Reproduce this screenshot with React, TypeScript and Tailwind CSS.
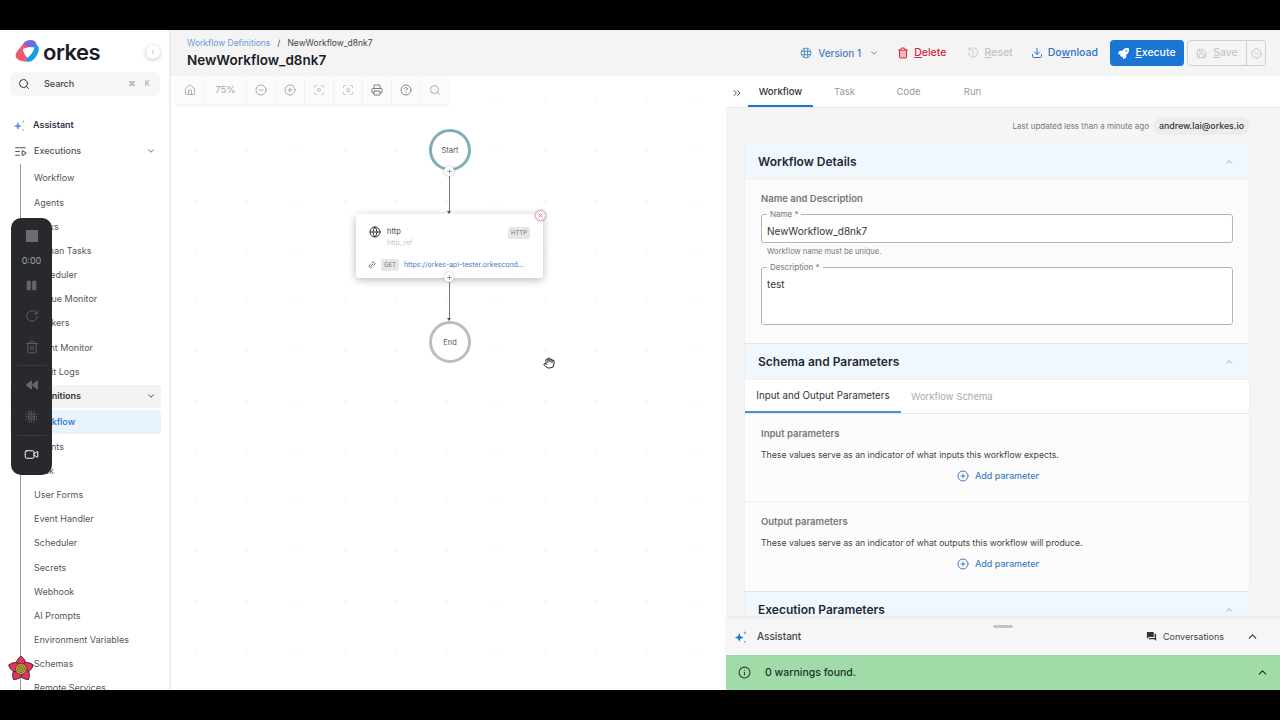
import {
  ChevronDown,
  ChevronLeft,
  ChevronUp,
  ChevronsRight,
  CircleChevronDown,
  CircleHelp,
  CircleMinus,
  CirclePlus,
  Download,
  Focus,
  Globe,
  Hand,
  Home,
  Info,
  Link2,
  ListVideo,
  Plus,
  Printer,
  RotateCw,
  Save,
  ScanSearch,
  Search,
  Trash2,
  Video,
  X,
} from "lucide-react";
import type { ReactNode } from "react";
import { FaBackward, FaPause, FaRocket } from "react-icons/fa";
import { MdForum } from "react-icons/md";

const executionItems = [
  "Workflow",
  "Agents",
  "Tasks",
  "Human Tasks",
  "Scheduler",
  "Queue Monitor",
  "Workers",
  "Event Monitor",
  "Audit Logs",
];

const definitionItems = [
  "Agents",
  "Task",
  "User Forms",
  "Event Handler",
  "Scheduler",
  "Secrets",
  "Webhook",
  "AI Prompts",
  "Environment Variables",
  "Schemas",
  "Remote Services",
];

function Sparkle({ className }: { className: string }) {
  return (
    <svg viewBox="0 0 16 16" className={className} fill="currentColor">
      <path d="M6 3.500 7.400 7 11 8.500 7.400 10 6 13.500 4.600 10 1 8.500 4.600 7Z" />
      <path d="M12.500 1 13.100 2.500 14.500 3 13.100 3.600 12.500 5 11.900 3.600 10.500 3 11.900 2.500Z" opacity="0.7" />
      <path d="M12.500 12 13 13 14 13.500 13 14 12.500 15 12 14 11 13.500 12 13Z" opacity="0.7" />
    </svg>
  );
}

function GridGlobe({ className }: { className: string }) {
  return (
    <svg viewBox="0 0 16 16" className={className} fill="none" stroke="currentColor" strokeWidth="1.200">
      <circle cx="8" cy="8" r="6.500" />
      <path d="M5.800 2v12M10.200 2v12M2 5.800h12M2 10.200h12" />
    </svg>
  );
}

function DottedGrid({ className }: { className: string }) {
  return (
    <svg viewBox="0 0 16 16" className={className} fill="none" stroke="currentColor" strokeWidth="1.300" strokeDasharray="1.500 1">
      <path d="M5 1v14M8 1v14M11 1v14M1 5h14M1 8h14M1 11h14" />
    </svg>
  );
}

function ResetIcon({ className }: { className: string }) {
  return (
    <svg viewBox="0 0 16 16" className={className} fill="none" stroke="currentColor" strokeWidth="1.200" strokeLinecap="round">
      <path d="M3 3.500A6.300 6.300 0 1 1 1.800 8" />
      <path d="M2.500 1.500v2.500H5" />
      <path d="M8 4.800v4M8 10.800v.4" />
    </svg>
  );
}

function Logo() {
  return (
    <svg viewBox="0 0 24 24" className="h-[25px] w-[25px] shrink-0">
      <path d="M7.500 5 C9 2 12 1 15 1 C18 1 20 2 20.500 5 L21 9 L12 8Z" fill="#7f63e6" />
      <path d="M8 4.500 L13 8 L11 21.500 C8 22 4 21 2 19 C0 17 0 15 2 12Z" fill="#ec5a72" />
      <path d="M20 5 C22.500 6 23.500 9 22.500 12 C21.500 15 20 18 17.500 20 C15.500 22 13 22 10.500 21.500 L13 11Z" fill="#159fe3" />
      <path d="M7.500 9.500 C10 8 15 7.500 18.500 8 C18.500 11 15 16 12 18 C9.500 16 8 12.500 7.500 9.500Z" fill="#ffffff" />
    </svg>
  );
}

function NavLink({ label, active }: { label: string; active?: boolean }) {
  return (
    <div
      className={
        "flex h-[24.2px] items-center rounded-sm text-[9px] " +
        (active
          ? "ml-[10px] w-[151px] bg-[#e9f3fc] pl-[24px] font-medium text-[#1976d2]"
          : "pl-[34px] text-[#555]")
      }
    >
      {label}
    </div>
  );
}

function Sidebar() {
  return (
    <aside className="flex h-full w-[171px] shrink-0 flex-col overflow-hidden border-r-[2px] border-[#eeeeee] bg-white">
      <div className="flex h-[40px] shrink-0 items-center pl-[15px] pt-[3px]">
        <Logo />
        <span className="ml-[3px] text-[22px] leading-none font-semibold tracking-[-0.5px] text-[#1c1c28]">orkes</span>
        <div className="ml-[46px] flex h-[14px] w-[14px] items-center justify-center rounded-full bg-white shadow-[0_1px_4px_rgba(0,0,0,0.25)]">
          <ChevronLeft size={8} className="text-[#aaa]" />
        </div>
      </div>
      <div className="ml-[10px] mt-[2px] flex h-[24px] w-[150px] shrink-0 items-center rounded-md bg-[#f6f6f6] pl-[8px]">
        <Search size={12} className="text-[#333]" />
        <span className="ml-[14px] text-[9px] font-medium text-[#444]">Search</span>
        <span className="ml-auto mr-[3px] flex h-[12px] w-[12px] items-center justify-center text-[7px] text-[#999]">⌘</span>
        <span className="mr-[7px] flex h-[12px] w-[12px] items-center justify-center text-[7px] text-[#999]">K</span>
      </div>
      <div className="mt-[16px] flex h-[26px] shrink-0 items-center pl-[13px]">
        <Sparkle className="h-[13px] w-[13px] text-[#6f8fe0]" />
        <span className="ml-[7px] text-[9px] font-semibold text-[#33334a]">Assistant</span>
      </div>
      <div className="flex h-[26px] shrink-0 items-center pl-[14px] pr-[13px]">
        <ListVideo size={13} className="text-[#555]" />
        <span className="ml-[7px] text-[9px] font-medium text-[#555]">Executions</span>
        <ChevronDown size={10} className="ml-auto text-[#555]" />
      </div>
      <div className="relative flex-1">
        <div className="absolute bottom-0 left-[20px] top-0 w-px bg-[#9a9a9a]" />
        <div className="pt-[2px]">
          {executionItems.map((item) => (
            <NavLink key={item} label={item} />
          ))}
        </div>
        <div className="relative ml-[10px] mt-[1px] flex h-[23px] w-[151px] items-center rounded-sm bg-[#f3f3f3] pl-[24px] pr-[5px] text-[9px] font-semibold text-[#333]">
          Definitions
          <ChevronDown size={10} className="ml-auto text-[#333]" />
        </div>
        <div className="mt-[2.400px]">
          <NavLink label="Workflow" active />
        </div>
        {definitionItems.map((item) => (
          <NavLink key={item} label={item} />
        ))}
      </div>
    </aside>
  );
}

function HeaderAction({ icon, label, tone }: { icon: ReactNode; label: ReactNode; tone: string }) {
  return (
    <div className={"flex items-center gap-[5px] text-[10.500px] font-medium " + tone}>
      {icon}
      <span>{label}</span>
    </div>
  );
}

function Header() {
  return (
    <header className="flex h-[46px] shrink-0 items-center justify-between bg-[#f4f4f4] pl-[16px] pr-[14px] shadow-[0_1px_3px_rgba(0,0,0,0.05)]">
      <div>
        <div className="flex gap-[7px] text-[8.500px] leading-[12px]">
          <span className="text-[#6b9bd6]">Workflow Definitions</span>
          <span className="text-[#444]">/</span>
          <span className="text-[#444]">NewWorkflow_d8nk7</span>
        </div>
        <div className="mt-[3px] text-[13.500px] leading-[17px] font-semibold text-[#1c1c28]">NewWorkflow_d8nk7</div>
      </div>
      <div className="flex items-center">
        <div className="flex items-center gap-[6px] text-[10px] font-medium text-[#4a7ec0]">
          <GridGlobe className="h-[12px] w-[12px]" />
          Version 1
        </div>
        <ChevronDown size={10} className="ml-[8px] text-[#4a7ec0]" />
        <div className="ml-[18px]">
          <HeaderAction
            icon={<Trash2 size={12} className="fill-[#f2b8bd]" />}
            label={<><u>D</u>elete</>}
            tone="text-[#d6293e]"
          />
        </div>
        <div className="ml-[21px]">
          <HeaderAction
            icon={<ResetIcon className="h-[12px] w-[12px]" />}
            label={<><u>R</u>eset</>}
            tone="text-[#c2c2c2]"
          />
        </div>
        <div className="ml-[18px]">
          <HeaderAction
            icon={<Download size={12} />}
            label={<>Do<u>w</u>nload</>}
            tone="text-[#2f75c4]"
          />
        </div>
        <div className="ml-[12px] flex h-[26px] w-[74px] items-center justify-center gap-[6px] rounded-[4px] bg-[#1976d2] text-[10.500px] font-medium text-white">
          <FaRocket size={11} />
          <span><u>E</u>xecute</span>
        </div>
        <div className="ml-[3px] flex h-[26px] items-center rounded-[4px] border border-[#cfcfcf] text-[10.500px] text-[#c2c2c2]">
          <div className="flex h-full w-[59px] items-center justify-center gap-[6px] border-r border-[#cfcfcf]">
            <Save size={11} />
            <span><u>S</u>ave</span>
          </div>
          <div className="flex w-[18px] justify-center">
            <CircleChevronDown size={11} />
          </div>
        </div>
      </div>
    </header>
  );
}

function Toolbar() {
  const tool = "flex h-full w-[29px] items-center justify-center border-r border-[#f3f3f3]";
  return (
    <div className="absolute left-[5px] top-0 flex h-[28px] items-center bg-[#fbfbfb] text-[#a9a9a9] shadow-[0_2px_4px_rgba(0,0,0,0.06)]">
      <div className={tool}><Home size={12} /></div>
      <div className="flex h-full w-[42px] items-center justify-center border-r border-[#f3f3f3] text-[9.500px]">75%</div>
      <div className={tool}><CircleMinus size={12} /></div>
      <div className={tool}><CirclePlus size={12} /></div>
      <div className={tool + " text-[#c4c4c4]"}><Focus size={12} /></div>
      <div className={tool + " text-[#c4c4c4]"}><ScanSearch size={12} /></div>
      <div className={tool + " text-[#777]"}><Printer size={12} /></div>
      <div className={tool + " text-[#888]"}><CircleHelp size={12} /></div>
      <div className="flex h-full w-[27px] items-center justify-center"><Search size={12} /></div>
    </div>
  );
}

function PlusDot({ className }: { className: string }) {
  return (
    <div className={"absolute flex h-[10px] w-[10px] items-center justify-center rounded-full bg-white shadow-[0_0_2px_rgba(0,0,0,0.35)] " + className}>
      <Plus size={7} className="text-[#666]" />
    </div>
  );
}

function Connector({ className }: { className: string }) {
  return (
    <div className={"absolute left-[278px] w-px bg-[#777] " + className}>
      <div className="absolute -bottom-[1px] -left-[2px] h-0 w-0 border-x-[2.500px] border-t-[3px] border-x-transparent border-t-[#555]" />
    </div>
  );
}

function Canvas() {
  return (
    <div className="relative h-full min-w-0 flex-1 overflow-hidden bg-white bg-[radial-gradient(#f1f1f1_0.7px,transparent_0.8px)] bg-[length:50px_50px]">
      <Toolbar />
      <div className="absolute left-[258px] top-[53px] flex h-[42px] w-[42px] items-center justify-center rounded-full border-[3px] border-[#7eaeb8] bg-white pt-[1px] text-[7.500px] text-[#555]">
        Start
      </div>
      <PlusDot className="left-[273px] top-[90px]" />
      <Connector className="top-[100px] h-[37px]" />
      <div className="absolute left-[185px] top-[138px] h-[64px] w-[187px] rounded-[3px] bg-white shadow-[0_2px_8px_rgba(0,0,0,0.28)]">
        <div className="absolute left-[13px] top-[12px] text-[#333]"><Globe size={12} /></div>
        <div className="absolute left-[31px] top-[13px] text-[7.500px] leading-[10px] text-[#444]">http</div>
        <div className="absolute left-[31px] top-[24px] text-[7px] leading-[9px] text-[#c8c8c8]">http_ref</div>
        <div className="absolute right-[13px] top-[13px] rounded-[2px] bg-[#e6e6e6] px-[3px] py-[2px] text-[6px] leading-[8px] text-[#777]">HTTP</div>
        <div className="absolute left-[12px] top-[45px] flex items-center gap-[5px]">
          <Link2 size={8} className="-rotate-45 text-[#555]" />
          <span className="rounded-[2px] bg-[#e6e6e6] px-[3px] py-[2px] text-[6px] leading-[8px] text-[#777]">GET</span>
          <span className="w-[121px] truncate text-[7px] leading-[10px] text-[#3f7cc4]">https://orkes-api-tester.orkesconductor.io/api</span>
        </div>
      </div>
      <div className="absolute left-[364px] top-[134px] flex h-[11px] w-[11px] items-center justify-center rounded-full border border-[#e8a0a8] bg-white shadow-[0_0_3px_rgba(0,0,0,0.25)]">
        <X size={7} className="text-[#d6293e]" />
      </div>
      <PlusDot className="left-[273px] top-[196px]" />
      <Connector className="top-[206px] h-[38px]" />
      <div className="absolute left-[258px] top-[245px] flex h-[42px] w-[42px] items-center justify-center rounded-full border-[3px] border-[#bdbdbd] bg-white pt-[1px] text-[7.500px] text-[#555]">
        End
      </div>
      <div className="absolute left-[372px] top-[281px] text-[#222]"><Hand size={12} /></div>
    </div>
  );
}

function CardHeader({ title }: { title: string }) {
  return (
    <div className="flex h-[36px] shrink-0 items-center justify-between border-b border-[#eef0f2] bg-[#f1f8fd] pl-[13px] pr-[15px]">
      <span className="text-[12px] font-semibold text-[#1f2a37]">{title}</span>
      <ChevronUp size={10} className="text-[#999]" />
    </div>
  );
}

function OutlinedField({ label, value, height }: { label: string; value: string; height: string }) {
  return (
    <div className={"relative rounded-[3px] border border-[#b5b5b5] bg-white px-[5px] " + height}>
      <span className="absolute -top-[6px] left-[5px] bg-[#fbfbfb] px-[3px] text-[8px] leading-[10px] text-[#777]">
        {label}
      </span>
      <div className="pt-[10px] text-[10px] leading-[13px] text-[#333]">{value}</div>
    </div>
  );
}

function ParamSection({ title, text, h }: { title: string; text: string; h: string }) {
  return (
    <div className={"bg-[#fcfcfc] px-[16px] pt-[14px] " + h}>
      <div className="text-[9.500px] leading-[12px] font-semibold text-[#777]">{title}</div>
      <div className="mt-[9px] text-[8.700px] leading-[12px] text-[#444]">{text}</div>
      <div className="mt-[9px] flex items-center justify-center gap-[6px] pl-[2px] text-[9px] font-medium leading-[12px] text-[#3f7cc4]">
        <CirclePlus size={12} />
        Add parameter
      </div>
    </div>
  );
}

function RightPanel() {
  return (
    <div className="flex h-full w-[554px] shrink-0 flex-col bg-[#f5f5f5]">
      <div className="flex h-[32px] shrink-0 items-end border-b border-[#e8e8e8] bg-white pl-[5px] text-[9.500px]">
        <div className="flex h-full w-[17px] items-center pt-[2px] text-[#444]"><ChevronsRight size={12} /></div>
        <div className="flex h-full w-[65px] items-center justify-center border-b-2 border-[#1976d2] pt-[4px] font-medium text-[#333]">Workflow</div>
        <div className="flex h-full w-[63px] items-center justify-center pt-[2px] text-[#999]">Task</div>
        <div className="flex h-full w-[65px] items-center justify-center pt-[2px] text-[#999]">Code</div>
        <div className="flex h-full w-[63px] items-center justify-center pt-[2px] text-[#999]">Run</div>
      </div>
      <div className="min-h-0 flex-1 overflow-hidden pl-[18px] pr-[30px]">
        <div className="flex h-[36px] items-center justify-end gap-[4px] text-[8px] text-[#777]">
          Last updated less than a minute ago
          <span className="rounded-full bg-[#ececec] px-[6px] py-[2px] text-[8.800px] font-medium text-[#333]">andrew.lai@orkes.io</span>
        </div>
        <div className="border-x border-[#f0f0f0] bg-white">
          <CardHeader title="Workflow Details" />
          <div className="h-[164px] border-b border-[#e6e6e6] bg-[#fbfbfb] px-[16px] pt-[13px]">
            <div className="text-[9.500px] leading-[12px] font-semibold text-[#777]">Name and Description</div>
            <div className="mt-[9px]">
              <OutlinedField label="Name *" value="NewWorkflow_d8nk7" height="h-[29px]" />
            </div>
            <div className="mb-[10px] ml-[6px] mt-[4px] text-[7.500px] leading-[10px] text-[#777]">Workflow name must be unique.</div>
            <OutlinedField label="Description *" value="test" height="h-[58px]" />
          </div>
          <CardHeader title="Schema and Parameters" />
          <div className="flex h-[34px] border-b border-[#e4e4e4] bg-white pt-[1px] text-[9.800px]">
            <div className="flex w-[156px] items-center justify-center border-b-2 border-[#4a90d9] text-[#333]">Input and Output Parameters</div>
            <div className="ml-[10px] flex items-center text-[9.500px] text-[#aaa]">Workflow Schema</div>
          </div>
          <ParamSection
            title="Input parameters"
            text="These values serve as an indicator of what inputs this workflow expects."
            h="h-[88px] border-b border-[#f0f0f0]"
          />
          <ParamSection
            title="Output parameters"
            text="These values serve as an indicator of what outputs this workflow will produce."
            h="h-[90px] border-b border-[#dfe3e6]"
          />
          <CardHeader title="Execution Parameters" />
        </div>
      </div>
      <div className="relative flex h-[37px] shrink-0 items-center bg-[#f6f6f6] pl-[8px] pr-[21px] shadow-[0_-1px_3px_rgba(0,0,0,0.08)]">
        <div className="absolute left-[267px] top-[7px] h-[3px] w-[20px] rounded-full bg-[#c4c4c4]" />
        <Sparkle className="h-[14px] w-[14px] text-[#1976d2]" />
        <span className="ml-[9px] text-[10px] font-medium text-[#444]">Assistant</span>
        <MdForum size={11} className="ml-auto text-[#333]" />
        <span className="ml-[6px] text-[9px] text-[#444]">Conversations</span>
        <ChevronUp size={13} className="ml-[22px] text-[#333]" />
      </div>
      <div className="flex h-[35px] shrink-0 items-center bg-[#a0dba8] pl-[12px] pr-[11px]">
        <Info size={13} className="text-[#2c3e30]" />
        <span className="ml-[14px] text-[10.500px] font-medium text-[#22302a]">0 warnings found.</span>
        <ChevronUp size={13} className="ml-auto text-[#22302a]" />
      </div>
    </div>
  );
}

function RecorderOverlay() {
  return (
    <div className="absolute left-[11px] top-[218px] flex h-[257px] w-[41px] flex-col items-center rounded-[10px] bg-[#27292c] text-[#63666b]">
      <div className="mt-[12px] h-[12px] w-[12px] rounded-[1px] bg-[#6a6c70]" />
      <div className="mt-[13px] text-[9px] leading-[12px] text-[#a5a7aa]">0:00</div>
      <div className="mt-[13px]"><FaPause size={11} /></div>
      <div className="mt-[18px]"><RotateCw size={14} strokeWidth={1.500} /></div>
      <div className="mt-[17px]"><Trash2 size={14} strokeWidth={1.500} /></div>
      <div className="mt-[11px] h-px w-[30px] bg-[#3a3c40]" />
      <div className="mt-[13px]"><FaBackward size={12} /></div>
      <div className="mt-[19px]"><DottedGrid className="h-[13px] w-[13px]" /></div>
      <div className="mt-[12px] h-px w-[30px] bg-[#3a3c40]" />
      <div className="mt-[11px] text-white"><Video size={15} strokeWidth={1.500} /></div>
    </div>
  );
}

function ScanFlower() {
  const petals = [0, 72, 144, 216, 288];
  return (
    <svg viewBox="0 0 28 28" className="absolute left-[7px] top-[655px] h-[28px] w-[28px]">
      {petals.map((angle) => (
        <path
          key={angle}
          d="M14 14 C8 11 7.500 6 14 1 C20.500 6 20 11 14 14Z"
          transform={`rotate(${angle} 14 14)`}
          fill="#e5325f"
          stroke="#222"
          strokeWidth="0.800"
        />
      ))}
      <circle cx="14" cy="14" r="5.500" fill="#c2a838" stroke="#333" strokeWidth="0.700" />
      <circle cx="14" cy="14" r="3.500" fill="none" stroke="#4b5a2a" strokeWidth="0.700" />
      <circle cx="14" cy="14" r="1.500" fill="none" stroke="#4b5a2a" strokeWidth="0.700" />
    </svg>
  );
}

export default function App() {
  return (
    <div className="relative h-[720px] w-[1280px] overflow-hidden bg-black py-[30px] font-[family-name:Inter,sans-serif]">
      <div className="flex h-[660px] overflow-hidden bg-white">
        <Sidebar />
        <div className="flex min-w-0 flex-1 flex-col">
          <Header />
          <div className="flex min-h-0 flex-1">
            <Canvas />
            <RightPanel />
          </div>
        </div>
      </div>
      <RecorderOverlay />
      <ScanFlower />
    </div>
  );
}
